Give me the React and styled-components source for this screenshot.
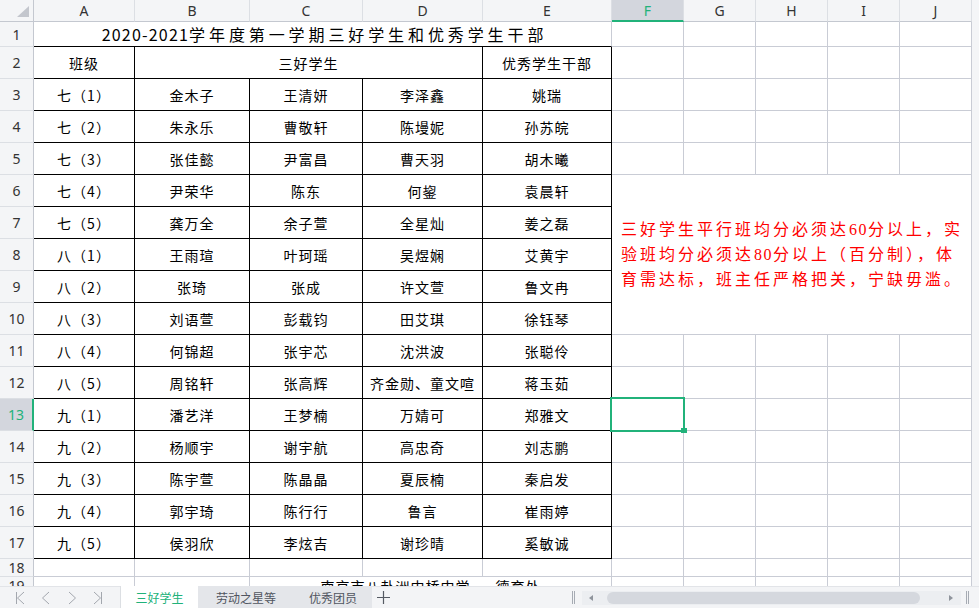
import React from "react";
import styled, { createGlobalStyle } from "styled-components";

const GREEN = "#21b27a";
const GRID = "#c9ccd5";
const HEAD_BG = "#f4f5f7";
const HEAD_LINE = "#c4c8d0";
const HEAD_SEP = "#dcdfe4";
const SEL_BG = "#d3d6dd";

const Global = createGlobalStyle`
  html, body { margin: 0; padding: 0; background: #fff; overflow: hidden; }
  body { font-family: "Noto Sans CJK SC", "Noto Sans", sans-serif; }
`;

const Window = styled.div`
  width: 979px;
  height: 608px;
  display: flex;
  flex-direction: column;
  overflow: hidden;
  background: #fff;
`;

const SheetArea = styled.div`
  flex: 1;
  min-height: 0;
  display: flex;
  overflow: hidden;
`;

const Grid = styled.div`
  flex: none;
  display: grid;
  grid-template-columns: 34px 101px 115px 113px 120px 129px repeat(5, 72px);
  grid-template-rows: 22px 25px repeat(16, 32px) 18px 18px;
  align-content: start;
`;

const VScroll = styled.div`
  flex: 1;
  background: ${HEAD_BG};
`;

const Corner = styled.div`
  box-sizing: border-box;
  background: ${HEAD_BG};
  border-right: 1px solid ${HEAD_LINE};
  border-bottom: 1px solid ${HEAD_LINE};
  display: flex;
  align-items: flex-end;
  justify-content: flex-end;
  padding: 0 4px 4px 0;
`;

const ColHead = styled.div`
  box-sizing: border-box;
  display: flex;
  align-items: center;
  justify-content: center;
  background: ${(p) => (p.$active ? SEL_BG : HEAD_BG)};
  color: ${(p) => (p.$active ? GREEN : "#333")};
  border-right: 1px solid ${HEAD_SEP};
  border-bottom: ${(p) => (p.$active ? `2px solid ${GREEN}` : `1px solid ${HEAD_LINE}`)};
  font-family: "Noto Sans", "Liberation Sans", sans-serif;
  font-size: 14px;
`;

const RowHead = styled.div`
  box-sizing: border-box;
  display: flex;
  align-items: center;
  justify-content: center;
  background: ${(p) => (p.$active ? SEL_BG : HEAD_BG)};
  color: ${(p) => (p.$active ? GREEN : "#333")};
  border-right: ${(p) => (p.$active ? `2px solid ${GREEN}` : `1px solid ${HEAD_LINE}`)};
  border-bottom: 1px solid ${HEAD_SEP};
  font-family: "Noto Sans", "Liberation Sans", sans-serif;
  font-size: 14px;
`;

const Cell = styled.div`
  box-sizing: border-box;
  position: relative;
  display: flex;
  align-items: center;
  justify-content: center;
  grid-column: ${(p) => (p.$span ? `span ${p.$span}` : "auto")};
  grid-row: ${(p) => (p.$rows ? `span ${p.$rows}` : "auto")};
  border-right: 1px solid ${(p) => (p.$edge ? "#000" : GRID)};
  border-bottom: 1px solid ${(p) => (p.$edge || p.$under ? "#000" : GRID)};
  font-family: "Noto Sans CJK SC", sans-serif;
  font-size: 14px;
  letter-spacing: 1px;
  color: #000;
  white-space: nowrap;
`;

const TitleCell = styled(Cell)`
  font-size: 16px;
  letter-spacing: 3.9px;
  padding-left: 4px;
`;

const TitleDigits = styled.span`
  letter-spacing: 1.2px;
`;

const FooterCell = styled(Cell)`
  white-space: pre;
`;

const NoteCell = styled(Cell)`
  flex-direction: column;
  align-items: flex-start;
  justify-content: center;
  padding: 0 0 0 9px;
  color: #ff0000;
  font-family: "Liberation Serif", "Noto Sans CJK SC", serif;
  font-size: 16px;
  line-height: 25px;
  letter-spacing: 3px;
`;

const NoteLine = styled.div``;

const NoteDigits = styled.span`
  letter-spacing: 1.5px;
`;

const Selection = styled.div`
  position: absolute;
  left: -2px;
  top: -2px;
  width: 75px;
  height: 35px;
  box-sizing: border-box;
  border: 2px solid ${GREEN};
  z-index: 2;
  pointer-events: none;
`;

const Handle = styled.div`
  position: absolute;
  right: -4px;
  bottom: -3px;
  width: 6px;
  height: 5px;
  background: ${GREEN};
`;

/* ---------- bottom tab bar ---------- */

const TabBar = styled.div`
  flex: none;
  box-sizing: border-box;
  height: 22px;
  display: flex;
  align-items: stretch;
  background: #f3f4f6;
  border-top: 1px solid #e2e4e8;
`;

const NavGroup = styled.div`
  width: 120px;
  flex: none;
  display: flex;
  align-items: center;
  gap: 12px;
  padding-left: 13px;
  box-sizing: border-box;
`;

const Tab = styled.div`
  flex: none;
  width: ${(p) => p.$w}px;
  display: flex;
  align-items: center;
  justify-content: center;
  background: ${(p) => (p.$active ? "#fff" : "#e4e6ea")};
  color: ${(p) => (p.$active ? GREEN : "#505560")};
  border-left: ${(p) => (p.$active ? "1px solid #dcdfe3" : "none")};
  font-family: "Noto Sans CJK SC", sans-serif;
  font-size: 12px;
  box-sizing: border-box;
  margin-top: -1px;
`;

const AddButton = styled.div`
  width: 22px;
  flex: none;
  display: flex;
  align-items: center;
  justify-content: center;
`;

const Spacer = styled.div`
  flex: 1;
`;

const ScrollGroup = styled.div`
  width: 410px;
  flex: none;
  display: flex;
  align-items: center;
`;

const Grip = styled.div`
  width: 8px;
  flex: none;
  display: flex;
  justify-content: center;
`;

const Track = styled.div`
  width: 379px;
  height: 14px;
  margin: 0 2px 0 5px;
  flex: none;
  display: flex;
  align-items: center;
  background: #eceef1;
  box-sizing: border-box;
  padding: 0 8px 0 7px;
`;

const Thumb = styled.div`
  width: 313px;
  height: 12px;
  border-radius: 6px;
  background: #d5d8de;
  margin: 0 auto 0 14px;
`;

const Chevron = ({ d }) => (
  <svg width="14" height="14" viewBox="0 0 14 14">
    <path d={d} fill="none" stroke="#a3a7ae" strokeWidth="1" />
  </svg>
);

const GripIcon = () => (
  <svg width="5" height="13" viewBox="0 0 5 13">
    <path d="M1.5 0V13M3.5 0V13" stroke="#a6abb3" strokeWidth="1" />
  </svg>
);

const Tri = ({ dir }) => (
  <svg width="4" height="6" viewBox="0 0 4 6">
    <polygon points={dir === "left" ? "4,0 4,6 0,3" : "0,0 0,6 4,3"} fill="#8f949c" />
  </svg>
);

const data = [
  ["七（1）", "金木子", "王清妍", "李泽鑫", "姚瑞"],
  ["七（2）", "朱永乐", "曹敬轩", "陈墁妮", "孙苏皖"],
  ["七（3）", "张佳懿", "尹富昌", "曹天羽", "胡木曦"],
  ["七（4）", "尹荣华", "陈东", "何鋆", "袁晨轩"],
  ["七（5）", "龚万全", "余子萱", "全星灿", "姜之磊"],
  ["八（1）", "王雨瑄", "叶珂瑶", "吴煜娴", "艾黄宇"],
  ["八（2）", "张琦", "张成", "许文萱", "鲁文冉"],
  ["八（3）", "刘语萱", "彭载钧", "田艾琪", "徐钰琴"],
  ["八（4）", "何锦超", "张宇芯", "沈洪波", "张聪伶"],
  ["八（5）", "周铭轩", "张高辉", "齐金勋、童文喧", "蒋玉茹"],
  ["九（1）", "潘艺洋", "王梦楠", "万婧可", "郑雅文"],
  ["九（2）", "杨顺宇", "谢宇航", "高忠奇", "刘志鹏"],
  ["九（3）", "陈宇萱", "陈晶晶", "夏辰楠", "秦启发"],
  ["九（4）", "郭宇琦", "陈行行", "鲁言", "崔雨婷"],
  ["九（5）", "侯羽欣", "李炫吉", "谢珍晴", "奚敏诚"],
];

const cols = ["A", "B", "C", "D", "E", "F", "G", "H", "I", "J"];

const emptyCells = (row, n, selectedFirst = false) =>
  Array.from({ length: n }, (_, i) => (
    <Cell key={`e${row}-${i}`}>
      {selectedFirst && i === 0 ? (
        <Selection>
          <Handle />
        </Selection>
      ) : null}
    </Cell>
  ));

export default function App() {
  const bodyRows = data.map((r, idx) => {
    const rowNo = idx + 3;
    let tail;
    if (rowNo === 6) {
      tail = (
        <NoteCell key="note" $span={5} $rows={5}>
          <NoteLine>
            三好学生平行班均分必须达<NoteDigits>60</NoteDigits>分以上，实
          </NoteLine>
          <NoteLine>
            验班均分必须达<NoteDigits>80</NoteDigits>分以上（百分制），体
          </NoteLine>
          <NoteLine>育需达标，班主任严格把关，宁缺毋滥。</NoteLine>
        </NoteCell>
      );
    } else if (rowNo >= 7 && rowNo <= 10) {
      tail = null;
    } else {
      tail = emptyCells(rowNo, 5, rowNo === 13);
    }
    return (
      <React.Fragment key={rowNo}>
        <RowHead $active={rowNo === 13}>{rowNo}</RowHead>
        {r.map((t, i) => (
          <Cell key={i} $edge>
            {t}
          </Cell>
        ))}
        {tail}
      </React.Fragment>
    );
  });

  return (
    <Window>
      <Global />
      <SheetArea>
        <Grid>
          <Corner>
            <svg width="12" height="11" viewBox="0 0 12 11">
              <polygon points="12,0 12,11 0,11" fill="#c3c6cd" />
            </svg>
          </Corner>
          {cols.map((c) => (
            <ColHead key={c} $active={c === "F"}>
              {c}
            </ColHead>
          ))}

          <RowHead>1</RowHead>
          <TitleCell $span={5} $under>
            <TitleDigits>2020-2021</TitleDigits>学年度第一学期三好学生和优秀学生干部
          </TitleCell>
          {emptyCells(1, 5)}

          <RowHead>2</RowHead>
          <Cell $edge>班级</Cell>
          <Cell $edge $span={3}>
            三好学生
          </Cell>
          <Cell $edge>优秀学生干部</Cell>
          {emptyCells(2, 5)}

          {bodyRows}

          <RowHead>18</RowHead>
          {emptyCells(18, 10)}

          <RowHead>19</RowHead>
          {emptyCells(19, 2)}
          <FooterCell $span={3}>南京市八卦洲中桥中学      德育处</FooterCell>
          {emptyCells(190, 5)}
        </Grid>
        <VScroll />
      </SheetArea>

      <TabBar>
        <NavGroup>
          <Chevron d="M3.5 1V13M11 1L4.5 7L11 13" />
          <Chevron d="M10 1L3.5 7L10 13" />
          <Chevron d="M4 1L10.5 7L4 13" />
          <Chevron d="M3 1L9.5 7L3 13M10.5 1V13" />
        </NavGroup>
        <Tab $active $w={78}>三好学生</Tab>
        <Tab $w={96}>劳动之星等</Tab>
        <Tab $w={78}>优秀团员</Tab>
        <AddButton>
          <svg width="13" height="13" viewBox="0 0 13 13">
            <path d="M6.5 0V13M0 6.5H13" stroke="#555a63" strokeWidth="1.2" />
          </svg>
        </AddButton>
        <Spacer />
        <ScrollGroup>
          <Grip>
            <GripIcon />
          </Grip>
          <Track>
            <Tri dir="left" />
            <Thumb />
            <Tri dir="right" />
          </Track>
          <Grip>
            <GripIcon />
          </Grip>
        </ScrollGroup>
      </TabBar>
    </Window>
  );
}
